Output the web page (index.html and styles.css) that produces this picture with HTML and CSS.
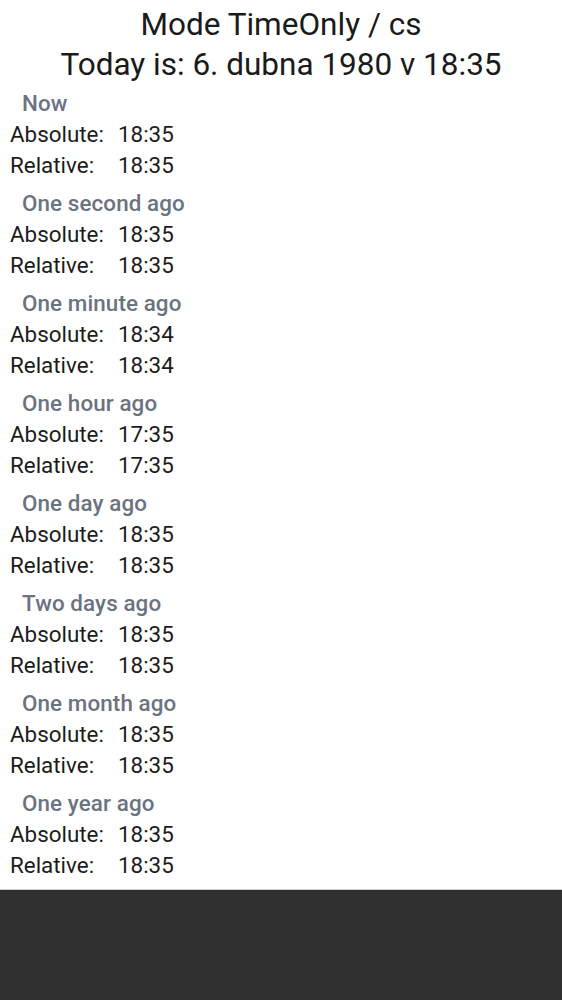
FILE: index.html
```html
<!DOCTYPE html>
<html lang="en">
<head>
<meta charset="utf-8">
<title>Mode TimeOnly / cs</title>
<link rel="stylesheet" href="styles.css">
</head>
<body>
<div class="page">
  <main class="content">
    <h1 class="title">Mode TimeOnly / cs<br>Today is: 6. dubna 1980 v 18:35</h1>
    <section class="case">
      <div class="case-title">Now</div>
      <div class="row"><span class="label">Absolute:</span><span class="value">18:35</span></div>
      <div class="row"><span class="label">Relative:</span><span class="value">18:35</span></div>
    </section>
    <section class="case">
      <div class="case-title">One second ago</div>
      <div class="row"><span class="label">Absolute:</span><span class="value">18:35</span></div>
      <div class="row"><span class="label">Relative:</span><span class="value">18:35</span></div>
    </section>
    <section class="case">
      <div class="case-title">One minute ago</div>
      <div class="row"><span class="label">Absolute:</span><span class="value">18:34</span></div>
      <div class="row"><span class="label">Relative:</span><span class="value">18:34</span></div>
    </section>
    <section class="case">
      <div class="case-title">One hour ago</div>
      <div class="row"><span class="label">Absolute:</span><span class="value">17:35</span></div>
      <div class="row"><span class="label">Relative:</span><span class="value">17:35</span></div>
    </section>
    <section class="case">
      <div class="case-title">One day ago</div>
      <div class="row"><span class="label">Absolute:</span><span class="value">18:35</span></div>
      <div class="row"><span class="label">Relative:</span><span class="value">18:35</span></div>
    </section>
    <section class="case">
      <div class="case-title">Two days ago</div>
      <div class="row"><span class="label">Absolute:</span><span class="value">18:35</span></div>
      <div class="row"><span class="label">Relative:</span><span class="value">18:35</span></div>
    </section>
    <section class="case">
      <div class="case-title">One month ago</div>
      <div class="row"><span class="label">Absolute:</span><span class="value">18:35</span></div>
      <div class="row"><span class="label">Relative:</span><span class="value">18:35</span></div>
    </section>
    <section class="case">
      <div class="case-title">One year ago</div>
      <div class="row"><span class="label">Absolute:</span><span class="value">18:35</span></div>
      <div class="row"><span class="label">Relative:</span><span class="value">18:35</span></div>
    </section>
  </main>
  <footer class="footer"></footer>
</div>
</body>
</html>
```
FILE: styles.css
```css
html, body {
  margin: 0;
  padding: 0;
  background: #ffffff;
}
body {
  font-family: Roboto, "Noto Sans", sans-serif;
  color: #1c1c1c;
}
.page {
  display: flex;
  flex-direction: column;
  height: 1000px;
}
.content {
  flex: 1;
  padding: 5px 10px 0 10px;
}
.title {
  margin: 0;
  text-align: center;
  font-size: 31.5px;
  font-weight: 400;
  line-height: 40px;
  color: #1a1a1a;
}
.case {
  margin-top: 2.5px;
}
.case + .case {
  margin-top: 7px;
}
.case-title {
  padding-left: 12px;
  font-size: 22.4px;
  font-weight: 500;
  line-height: 31px;
  letter-spacing: 0.1px;
  color: #6b7280;
}
.row {
  display: grid;
  grid-template-columns: 108px auto;
  font-size: 22.4px;
  line-height: 31px;
  color: #1c1c1c;
}
.footer {
  height: 110px;
  background: #303030;
  border-top: 1px solid #cfcfcf;
}
```
